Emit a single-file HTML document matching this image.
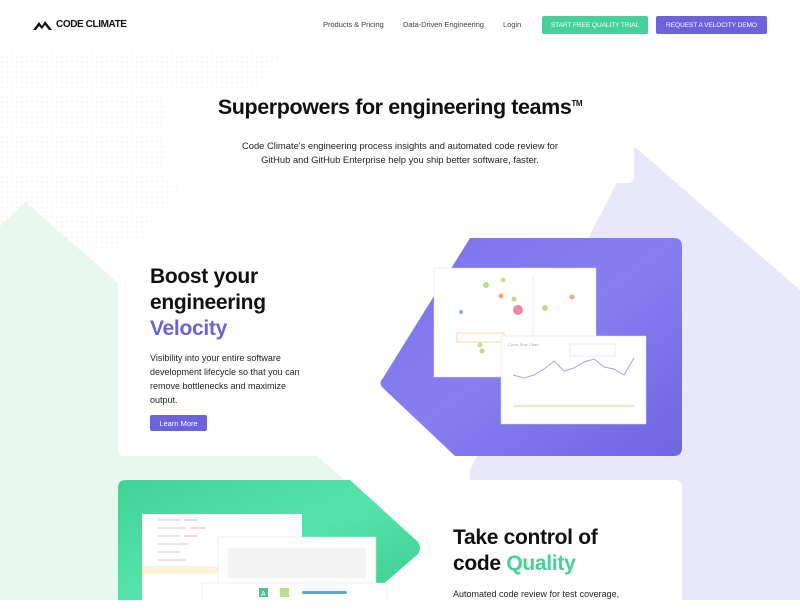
<!DOCTYPE html>
<html><head><meta charset="utf-8"><style>
*{margin:0;padding:0;box-sizing:border-box}
body{width:800px;height:600px;overflow:hidden;background:#fff;font-family:"Liberation Sans",sans-serif;position:relative;color:#111}
.abs{position:absolute}
.nav a{position:absolute;top:20px;font-size:7.6px;color:#444;letter-spacing:-0.1px}
.btn{position:absolute;top:16px;height:18px;color:#fff;font-size:6.6px;display:flex;align-items:center;justify-content:center;border-radius:2px;letter-spacing:-0.1px}
h2{font-size:21px;font-weight:bold;line-height:26px;letter-spacing:-0.3px}
.p{font-size:9px;line-height:14px;color:#222}
</style></head><body>
<svg class="abs" style="left:0;top:0" width="800" height="600">
<defs><pattern id="dots" width="5" height="5" patternUnits="userSpaceOnUse"><circle cx="2" cy="2" r="0.8" fill="#eeeef1"/></pattern>
<linearGradient id="pg" x1="0" y1="0" x2="1" y2="1"><stop offset="0" stop-color="#7d73ea"/><stop offset="0.5" stop-color="#877ef1"/><stop offset="1" stop-color="#6f65e0"/></linearGradient>
<linearGradient id="gg" x1="0" y1="0" x2="1" y2="1"><stop offset="0" stop-color="#3fd496"/><stop offset="0.5" stop-color="#55e4aa"/><stop offset="1" stop-color="#3ccf90"/></linearGradient></defs>
<polygon points="0,50 285,50 130,250 0,250" fill="url(#dots)"/>
<polygon points="0,226 25,202 345,480 345,600 0,600" fill="#e8f8ef"/>
<polygon points="635,147 800,290 800,600 470,600 470,470" fill="#e8e8fa"/>
</svg>
<div class="abs" style="left:165px;top:88px;width:469px;height:95px;background:#fff;border-radius:6px"></div>
<div class="abs" style="left:118px;top:238px;width:564px;height:218px;background:#fff;border-radius:6px"></div>
<div class="abs" style="left:118px;top:480px;width:564px;height:130px;background:#fff;border-radius:6px"></div>
<svg class="abs" style="left:0;top:0" width="800" height="600">
<path d="M470,238 L674,238 Q682,238 682,246 L682,448 Q682,456 674,456 L455,456 L383,388 Q378,383 383,378 Z" fill="url(#pg)"/>
<path d="M126,480 L350,480 L418,542 Q422,548 418,554 L365,600 L118,600 L118,488 Q118,480 126,480 Z" fill="url(#gg)"/>
<rect x="434" y="268" width="162" height="109" fill="#fff" stroke="#ddd" stroke-width="0.5"/>
<line x1="533" y1="275" x2="533" y2="370" stroke="#eee"/>
<circle cx="486" cy="285" r="3" fill="#b9e08a"/><circle cx="503" cy="280" r="2.5" fill="#c6e48f"/>
<circle cx="501" cy="296" r="2.5" fill="#f6a57a"/><circle cx="514" cy="299" r="2.5" fill="#b9e08a"/>
<circle cx="518" cy="310" r="5" fill="#ef8aa0"/><circle cx="545" cy="308" r="3" fill="#b9e08a"/>
<circle cx="572" cy="297" r="2.5" fill="#f6a57a"/><circle cx="461" cy="312" r="2" fill="#7bb6e0"/>
<rect x="457" y="333" width="47" height="9" fill="#fff" stroke="#f4d36b" stroke-width="0.7"/>
<circle cx="480" cy="345" r="2.5" fill="#c6e48f"/><circle cx="482" cy="351" r="2.5" fill="#b9e08a"/>
<rect x="501" y="336" width="145" height="88" fill="#fff" stroke="#ddd" stroke-width="0.5"/>
<text x="508" y="346" font-size="4" fill="#aaa">Cycle Time Chart</text>
<rect x="570" y="344" width="45" height="12" fill="#fff" stroke="#d8d6f5" stroke-width="0.5"/>
<polyline points="513,375 524,378 534,375 544,369 554,361 564,371 574,368 584,362 594,359 604,367 614,369 624,375 634,358" fill="none" stroke="#a9a3f1" stroke-width="1"/>
<line x1="513" y1="406" x2="634" y2="406" stroke="#b9e08a" stroke-width="1"/>
<rect x="142" y="514" width="160" height="90" fill="#fff"/>
<g fill="#e6e6e6"><rect x="158" y="519" width="22" height="2"/><rect x="158" y="527" width="28" height="2"/><rect x="158" y="535" width="22" height="2"/><rect x="158" y="543" width="30" height="2"/><rect x="158" y="551" width="22" height="2"/><rect x="158" y="559" width="28" height="2"/></g>
<g fill="#f6d9dc"><rect x="184" y="519" width="14" height="2"/><rect x="190" y="527" width="16" height="2"/><rect x="184" y="535" width="14" height="2"/></g>
<rect x="142" y="566" width="80" height="8" fill="#fbf4da"/>
<rect x="218" y="537" width="158" height="70" fill="#fff" stroke="#e5e5e5" stroke-width="0.5"/>
<rect x="228" y="548" width="138" height="30" fill="#f4f4f4"/>
<rect x="202" y="583" width="185" height="25" fill="#fff" stroke="#e5e5e5" stroke-width="0.5"/>
<rect x="259" y="588" width="9" height="9" fill="#45c690"/><text x="261" y="596" font-size="7" fill="#fff">A</text>
<rect x="280" y="588" width="9" height="9" fill="#b9e08a"/>
<rect x="302" y="591" width="45" height="3" rx="1.5" fill="#5aa6d6"/>
</svg>
<div class="abs" style="left:33px;top:18px;display:flex;align-items:center">
<svg width="20" height="13" viewBox="0 0 20 13"><path d="M0,12 L6,4 L9,8 L12,3 L19,12 L16,12 L12,7 L9,11 L6,8 L3,12 Z" fill="#111"/></svg>
<span style="font-size:10px;font-weight:bold;margin-left:3px;letter-spacing:-0.4px">CODE CLIMATE</span></div>
<div class="nav"><a style="left:323px">Products &amp; Pricing</a><a style="left:403px">Data-Driven Engineering</a><a style="left:503px">Login</a></div>
<div class="btn" style="left:542px;width:106px;background:#45d197">START FREE QUALITY TRIAL</div>
<div class="btn" style="left:656px;width:111px;background:#6a63dc">REQUEST A VELOCITY DEMO</div>
<div class="abs" style="left:0;width:800px;top:95px;text-align:center;font-size:21.5px;font-weight:bold;letter-spacing:-0.4px">Superpowers for engineering teams<sup style="font-size:8px">TM</sup></div>
<div class="abs p" style="left:0;width:800px;top:139px;text-align:center;font-size:9.4px">Code Climate's engineering process insights and automated code review for<br>GitHub and GitHub Enterprise help you ship better software, faster.</div>
<h2 class="abs" style="left:150px;top:264px">Boost your<br>engineering<br><span style="color:#6c63dc">Velocity</span></h2>
<div class="abs p" style="left:150px;top:351px">Visibility into your entire software<br>development lifecycle so that you can<br>remove bottlenecks and maximize<br>output.</div>
<div class="abs" style="left:150px;top:415px;width:57px;height:16px;background:#6a63dc;color:#fff;font-size:7.5px;display:flex;align-items:center;justify-content:center;border-radius:2px">Learn More</div>
<h2 class="abs" style="left:453px;top:525px">Take control of<br>code <span style="color:#45d197">Quality</span></h2>
<div class="abs p" style="left:453px;top:587px">Automated code review for test coverage,</div>
</body></html>
